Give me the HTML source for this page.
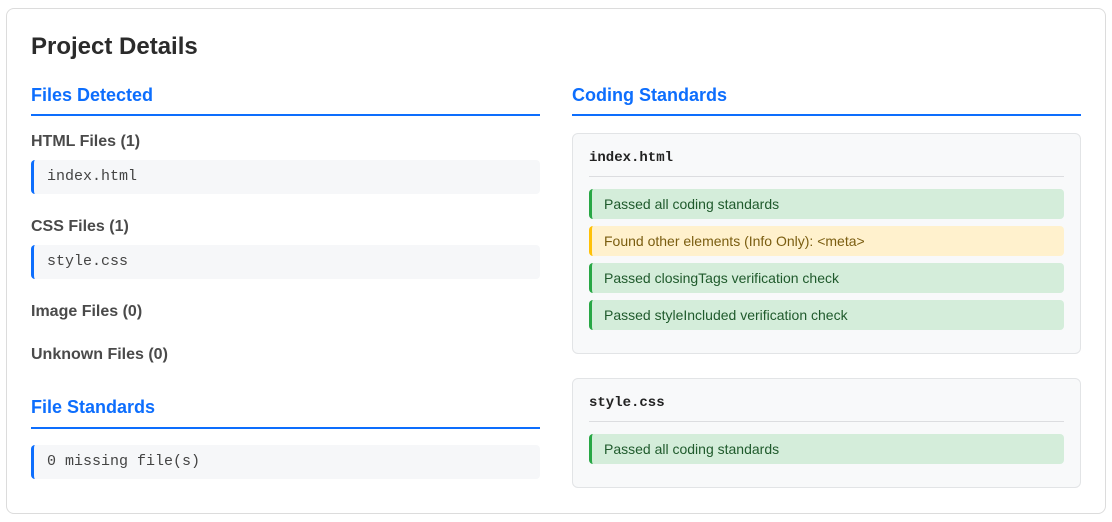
<!DOCTYPE html>
<html><head><meta charset="utf-8"><style>
*{margin:0;padding:0;box-sizing:border-box}
body{width:1112px;height:522px;background:#fff;font-family:"Liberation Sans","DejaVu Sans",sans-serif;position:relative;overflow:hidden}
.a{position:absolute}
.card{left:6px;top:8px;width:1100px;height:506px;border:1px solid #dcdcdc;border-radius:8px}
.h1{left:31px;top:31px;font-size:24px;font-weight:bold;color:#2b2b2b;line-height:32px}
.h2{font-size:18px;font-weight:bold;color:#0d6efd;line-height:24px}
.ul{height:2px;background:#0d6efd;width:509px}
.lbl{left:31px;font-size:16px;color:#4a4a4a;line-height:20px;font-weight:bold}
.code{left:31px;width:509px;height:34px;background:#f6f7f9;border-left:3px solid #0d6efd;border-radius:4px;font-family:"Liberation Mono",monospace;font-size:15px;color:#444;padding-left:13px;line-height:34px}
.box{left:572px;width:509px;background:#f8f9fa;border:1px solid #e2e4e6;border-radius:6px}
.ft{left:589px;font-family:"Liberation Mono",monospace;font-weight:bold;font-size:14px;color:#222;line-height:18px}
.ln{left:589px;width:475px;height:1px;background:#dcdde0}
.it{left:589px;width:475px;height:30px;border-radius:4px;font-size:14px;line-height:30px;padding-left:12px}
.g{background:#d4edda;border-left:3px solid #28a745;color:#1f5a2c}
.y{background:#fff1cd;border-left:3px solid #ffc107;color:#7a5d10}
</style></head><body>
<div class="a card"></div>
<div class="a h1">Project Details</div>
<div class="a h2" style="left:31px;top:83px">Files Detected</div>
<div class="a ul" style="left:31px;top:114px"></div>
<div class="a lbl" style="top:132px">HTML Files (1)</div>
<div class="a code" style="top:160px">index.html</div>
<div class="a lbl" style="top:217px">CSS Files (1)</div>
<div class="a code" style="top:245px">style.css</div>
<div class="a lbl" style="top:302px">Image Files (0)</div>
<div class="a lbl" style="top:345px">Unknown Files (0)</div>
<div class="a h2" style="left:31px;top:395px">File Standards</div>
<div class="a ul" style="left:31px;top:427px"></div>
<div class="a code" style="top:445px">0 missing file(s)</div>

<div class="a h2" style="left:572px;top:83px">Coding Standards</div>
<div class="a ul" style="left:572px;top:114px"></div>
<div class="a box" style="top:133px;height:221px"></div>
<div class="a ft" style="top:149px">index.html</div>
<div class="a ln" style="top:176px"></div>
<div class="a it g" style="top:189px">Passed all coding standards</div>
<div class="a it y" style="top:226px">Found other elements (Info Only): &lt;meta&gt;</div>
<div class="a it g" style="top:263px">Passed closingTags verification check</div>
<div class="a it g" style="top:300px">Passed styleIncluded verification check</div>
<div class="a box" style="top:378px;height:110px"></div>
<div class="a ft" style="top:394px">style.css</div>
<div class="a ln" style="top:421px"></div>
<div class="a it g" style="top:434px">Passed all coding standards</div>
</body></html>
